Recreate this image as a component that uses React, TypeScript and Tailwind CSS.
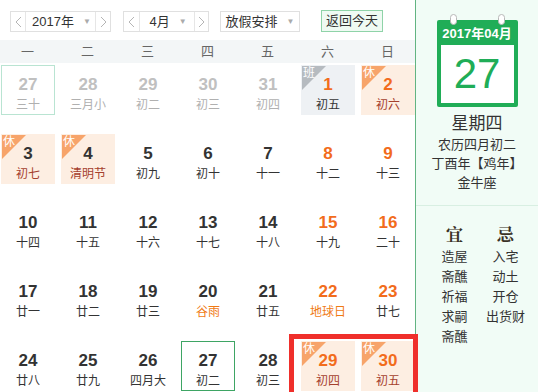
import React from "react";

type Day = {
  d: number;
  l: string;
  prev?: boolean;
  first?: boolean;
  today?: boolean;
  wk?: boolean;
  tag?: "休" | "班";
  fest?: boolean;
};

const rows: Day[][] = [
  [
    { d: 27, l: "三十", prev: true, first: true },
    { d: 28, l: "三月小", prev: true },
    { d: 29, l: "初二", prev: true },
    { d: 30, l: "初三", prev: true },
    { d: 31, l: "初四", prev: true },
    { d: 1, l: "初五", wk: true, tag: "班" },
    { d: 2, l: "初六", wk: true, tag: "休" },
  ],
  [
    { d: 3, l: "初七", tag: "休" },
    { d: 4, l: "清明节", tag: "休" },
    { d: 5, l: "初九" },
    { d: 6, l: "初十" },
    { d: 7, l: "十一" },
    { d: 8, l: "十二", wk: true },
    { d: 9, l: "十三", wk: true },
  ],
  [
    { d: 10, l: "十四" },
    { d: 11, l: "十五" },
    { d: 12, l: "十六" },
    { d: 13, l: "十七" },
    { d: 14, l: "十八" },
    { d: 15, l: "十九", wk: true },
    { d: 16, l: "二十", wk: true },
  ],
  [
    { d: 17, l: "廿一" },
    { d: 18, l: "廿二" },
    { d: 19, l: "廿三" },
    { d: 20, l: "谷雨", fest: true },
    { d: 21, l: "廿五" },
    { d: 22, l: "地球日", wk: true, fest: true },
    { d: 23, l: "廿七", wk: true },
  ],
  [
    { d: 24, l: "廿八" },
    { d: 25, l: "廿九" },
    { d: 26, l: "四月大" },
    { d: 27, l: "初二", today: true },
    { d: 28, l: "初三" },
    { d: 29, l: "初四", wk: true, tag: "休" },
    { d: 30, l: "初五", wk: true, tag: "休" },
  ],
];

const Arrow = ({ right }: { right?: boolean }) => (
  <svg width="7" height="12" viewBox="0 0 7 12" className="text-[#b5b5b5]">
    <polyline
      points={right ? "1,1 6,6 1,11" : "6,1 1,6 6,11"}
      fill="none"
      stroke="currentColor"
      strokeWidth="1"
    />
  </svg>
);

const Caret = () => <span className="ml-[9px] text-[8px] text-[#aaa]">▼</span>;

const DayCell = ({ c }: { c: Day }) => {
  let bg = "";
  if (c.tag === "休") bg = "bg-[#fdeee2]";
  if (c.tag === "班") bg = "bg-[#eef1f4]";
  let border = "border border-transparent";
  if (c.first) border = "border border-[#b9e4d2]";
  if (c.today) border = "border border-[#3ea564]";

  let num = "text-[#333]";
  if (c.prev) num = "text-[#c0c0c0]";
  else if (c.wk) num = "text-[#f26c1c]";

  let lunar = "text-[#333]";
  if (c.prev) lunar = "text-[#b0b0b0]";
  else if (c.fest) lunar = "text-[#f07a14]";
  else if (c.tag === "休") lunar = "text-[#a5402d]";

  return (
    <div className={`relative flex h-[50px] flex-col items-center pt-[8px] ${bg} ${border}`}>
      {c.tag && (
        <>
          <div
            className={`absolute left-0 top-0 h-0 w-0 border-r-[24px] border-t-[24px] border-r-transparent ${
              c.tag === "休" ? "border-t-[#f7a46a]" : "border-t-[#b6bbc0]"
            }`}
          />
          <span className="absolute left-[1px] top-[-1px] text-[12px] leading-[16px] text-white">
            {c.tag}
          </span>
        </>
      )}
      <span className={`text-[17px] font-bold leading-[22px] ${num}`}>{c.d}</span>
      <span className={`text-[12px] leading-[18px] ${lunar}`}>{c.l}</span>
    </div>
  );
};

export default function App() {
  return (
    <div className="relative flex h-[392px] w-[538px] overflow-hidden bg-white font-['Liberation_Sans','Noto_Sans_CJK_SC',sans-serif] text-[#333]">
      <div className="w-[415px] shrink-0">
        <div className="flex h-[40px] items-start pl-[10px] pt-[11px] text-[13px]">
          <div className="flex h-[21px] items-center border border-[#e0e0e0]">
            <div className="flex h-full w-[15px] items-center justify-center border-r border-[#e6e6e6]">
              <Arrow />
            </div>
            <div className="flex w-[69px] items-center justify-center pl-[2px]">
              2017年
              <Caret />
            </div>
            <div className="flex h-full w-[15px] items-center justify-center border-l border-[#e6e6e6]">
              <Arrow right />
            </div>
          </div>
          <div className="ml-[12px] flex h-[21px] items-center border border-[#e0e0e0]">
            <div className="flex h-full w-[16px] items-center justify-center border-r border-[#e6e6e6]">
              <Arrow />
            </div>
            <div className="flex w-[54px] items-center justify-center pl-[2px]">
              4月
              <Caret />
            </div>
            <div className="flex h-full w-[14px] items-center justify-center border-l border-[#e6e6e6]">
              <Arrow right />
            </div>
          </div>
          <div className="ml-[11px] flex h-[21px] w-[80px] items-center justify-center border border-[#e0e0e0]">
            放假安排
            <Caret />
          </div>
          <div className="ml-[21px] flex h-[22px] w-[62px] items-center justify-center border border-[#8fd3a8] bg-[#effaf3] mt-[-1px]">
            返回今天
          </div>
        </div>
        <div className="grid h-[23px] grid-cols-[repeat(7,60px)] items-center bg-[#f3f6f7] text-[13px] text-[#666]">
          {["一", "二", "三", "四", "五", "六", "日"].map((w) => (
            <div key={w} className="pr-[5px] text-center">
              {w}
            </div>
          ))}
        </div>
        <div className="grid grid-cols-[repeat(7,54px)] gap-x-[6px] gap-y-[19px] pl-[1px] pt-[2px]">
          {rows.flat().map((c, i) => (
            <DayCell key={i} c={c} />
          ))}
        </div>
      </div>

      <div className="flex flex-1 flex-col items-center border-l border-[#62b482] bg-[#f1fcf6]">
        <div className="relative mt-[20px] h-[87px] w-[81px] rounded-[2px] bg-[#20ad57] px-[4px] pb-[4px]">
          <div className="absolute left-[13px] top-[-6px] h-[11px] w-[7px] rounded-full border border-[#b8b8b8] bg-white" />
          <div className="absolute right-[13px] top-[-6px] h-[11px] w-[7px] rounded-full border border-[#b8b8b8] bg-white" />
          <div className="flex h-[25px] items-center justify-center pt-[2px] text-[13px] font-bold text-white">
            2017年04月
          </div>
          <div className="flex h-[58px] items-center justify-center bg-white text-[42px] leading-none text-[#20ad57]">
            27
          </div>
        </div>
        <div className="mt-[6px] text-[17px] leading-[22px]">星期四</div>
        <div className="text-[13px] leading-[19px]">农历四月初二</div>
        <div className="text-[13px] leading-[19px]">丁酉年【鸡年】</div>
        <div className="text-[13px] leading-[19px]">金牛座</div>
        <div className="mt-[13px] h-px w-full bg-[#d8efe2]" />
        <div className="mt-[18px] flex gap-[7px] pl-[6px] text-[13px] leading-[20px]">
          <div className="flex w-[44px] flex-col items-center">
            <div className="mb-[3px] font-['Noto_Serif_CJK_SC','Noto_Sans_CJK_SC',serif] text-[17px] font-bold text-[#3a3226]">
              宜
            </div>
            {["造屋", "斋醮", "祈福", "求嗣", "斋醮"].map((t, i) => (
              <div key={i}>{t}</div>
            ))}
          </div>
          <div className="flex w-[44px] flex-col items-center">
            <div className="mb-[3px] font-['Noto_Serif_CJK_SC','Noto_Sans_CJK_SC',serif] text-[17px] font-bold text-[#3a3226]">
              忌
            </div>
            {["入宅", "动土", "开仓", "出货财"].map((t, i) => (
              <div key={i} className="whitespace-nowrap">
                {t}
              </div>
            ))}
          </div>
        </div>
      </div>

      <div className="pointer-events-none absolute left-[289px] top-[334px] h-[70px] w-[129px] border-[5px] border-[#ef2f2b]" />
    </div>
  );
}
